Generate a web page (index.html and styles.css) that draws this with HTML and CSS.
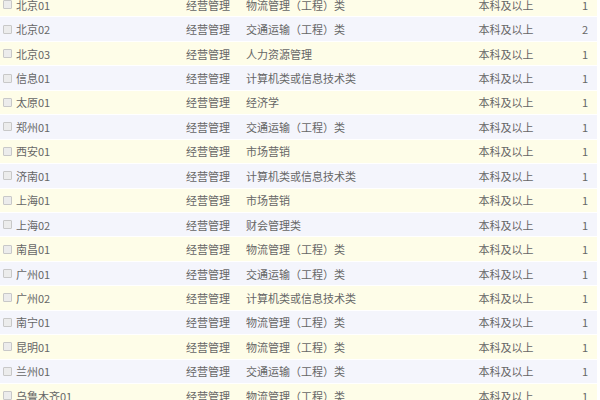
FILE: index.html
```html
<!DOCTYPE html>
<html lang="zh-CN">
<head>
<meta charset="utf-8">
<link rel="stylesheet" href="styles.css">
</head>
<body>
<div class="list">
  <div class="row"><div class="name"><span class="cb"></span>北京01</div><div>经营管理</div><div>物流管理（工程）类</div><div class="edu">本科及以上</div><div class="num">1</div></div>
  <div class="row"><div class="name"><span class="cb"></span>北京02</div><div>经营管理</div><div>交通运输（工程）类</div><div class="edu">本科及以上</div><div class="num">2</div></div>
  <div class="row"><div class="name"><span class="cb"></span>北京03</div><div>经营管理</div><div>人力资源管理</div><div class="edu">本科及以上</div><div class="num">1</div></div>
  <div class="row"><div class="name"><span class="cb"></span>信息01</div><div>经营管理</div><div>计算机类或信息技术类</div><div class="edu">本科及以上</div><div class="num">1</div></div>
  <div class="row"><div class="name"><span class="cb"></span>太原01</div><div>经营管理</div><div>经济学</div><div class="edu">本科及以上</div><div class="num">1</div></div>
  <div class="row"><div class="name"><span class="cb"></span>郑州01</div><div>经营管理</div><div>交通运输（工程）类</div><div class="edu">本科及以上</div><div class="num">1</div></div>
  <div class="row"><div class="name"><span class="cb"></span>西安01</div><div>经营管理</div><div>市场营销</div><div class="edu">本科及以上</div><div class="num">1</div></div>
  <div class="row"><div class="name"><span class="cb"></span>济南01</div><div>经营管理</div><div>计算机类或信息技术类</div><div class="edu">本科及以上</div><div class="num">1</div></div>
  <div class="row"><div class="name"><span class="cb"></span>上海01</div><div>经营管理</div><div>市场营销</div><div class="edu">本科及以上</div><div class="num">1</div></div>
  <div class="row"><div class="name"><span class="cb"></span>上海02</div><div>经营管理</div><div>财会管理类</div><div class="edu">本科及以上</div><div class="num">1</div></div>
  <div class="row"><div class="name"><span class="cb"></span>南昌01</div><div>经营管理</div><div>物流管理（工程）类</div><div class="edu">本科及以上</div><div class="num">1</div></div>
  <div class="row"><div class="name"><span class="cb"></span>广州01</div><div>经营管理</div><div>交通运输（工程）类</div><div class="edu">本科及以上</div><div class="num">1</div></div>
  <div class="row"><div class="name"><span class="cb"></span>广州02</div><div>经营管理</div><div>计算机类或信息技术类</div><div class="edu">本科及以上</div><div class="num">1</div></div>
  <div class="row"><div class="name"><span class="cb"></span>南宁01</div><div>经营管理</div><div>物流管理（工程）类</div><div class="edu">本科及以上</div><div class="num">1</div></div>
  <div class="row"><div class="name"><span class="cb"></span>昆明01</div><div>经营管理</div><div>物流管理（工程）类</div><div class="edu">本科及以上</div><div class="num">1</div></div>
  <div class="row"><div class="name"><span class="cb"></span>兰州01</div><div>经营管理</div><div>交通运输（工程）类</div><div class="edu">本科及以上</div><div class="num">1</div></div>
  <div class="row"><div class="name"><span class="cb"></span>乌鲁木齐01</div><div>经营管理</div><div>物流管理（工程）类</div><div class="edu">本科及以上</div><div class="num">1</div></div>
</div>
</body>
</html>
```
FILE: styles.css
```css
html, body {
  margin: 0;
  padding: 0;
  background: #ffffff;
  overflow: hidden;
}
body {
  font-family: "Noto Sans CJK SC", "Liberation Sans", sans-serif;
  font-size: 11px;
  color: #666666;
}
.list {
  width: 597px;
  margin-top: -7px;
}
.row {
  display: grid;
  grid-template-columns: 186px 60px 1fr 94px 46px;
  align-items: center;
  height: 24.44px;
  box-sizing: border-box;
  border-bottom: 1px solid #ffffff;
  background: #fefde8;
}
.row:nth-child(even) {
  background: #f4f5fc;
}
.name {
  display: flex;
  align-items: center;
  padding-left: 3px;
}
.cb {
  width: 7px;
  height: 7px;
  border: 1px solid #c8c8c8;
  background: #ececec;
  border-radius: 1px;
  margin-right: 4px;
  flex: none;
}
.edu {
  text-align: center;
  padding-left: 4px;
}
.num {
  text-align: right;
  padding-right: 9px;
}
```
